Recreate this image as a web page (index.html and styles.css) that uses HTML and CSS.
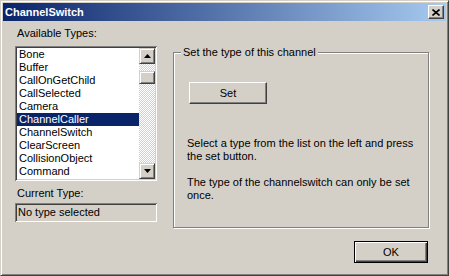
FILE: index.html
```html
<!DOCTYPE html>
<html lang="en">

<head>
    <meta charset="UTF-8" />
    <title>ChannelSwitch</title>
    <link rel="stylesheet" href="styles.css">
</head>

<body>
    <div class="window">
        <div class="titlebar">
            <span class="title">ChannelSwitch</span>
            <div class="close">
                <svg width="8" height="7" viewBox="0 0 8 7">
                    <path d="M0.5 0.5 L7.5 6.5 M7.5 0.5 L0.5 6.5" stroke="#000" stroke-width="1.6" fill="none" />
                </svg>
            </div>
        </div>

        <div class="content">
            <div class="left">
                <div class="label">Available Types:</div>
                <div class="listbox">
                    <ul class="items">
                        <li>Bone</li>
                        <li>Buffer</li>
                        <li>CallOnGetChild</li>
                        <li>CallSelected</li>
                        <li>Camera</li>
                        <li class="selected">ChannelCaller</li>
                        <li>ChannelSwitch</li>
                        <li>ClearScreen</li>
                        <li>CollisionObject</li>
                        <li>Command</li>
                    </ul>
                    <div class="scrollbar">
                        <div class="sb-btn">
                            <svg width="7" height="4" viewBox="0 0 7 4"><path d="M3.5 0 L7 4 L0 4 Z" fill="#000" /></svg>
                        </div>
                        <div class="track">
                            <div class="thumb"></div>
                        </div>
                        <div class="sb-btn">
                            <svg width="7" height="4" viewBox="0 0 7 4"><path d="M0 0 L7 0 L3.5 4 Z" fill="#000" /></svg>
                        </div>
                    </div>
                </div>
                <div class="label current-label">Current Type:</div>
                <div class="textbox">No type selected</div>
            </div>

            <div class="right">
                <div class="group">
                    <span class="legend">Set the type of this channel</span>
                    <div class="btn set-btn">Set</div>
                    <p class="info">Select a type from the list on the left and press the set button.</p>
                    <p class="info second">The type of the channelswitch can only be set once.</p>
                </div>
                <div class="footer">
                    <div class="btn ok-btn">OK</div>
                </div>
            </div>
        </div>
    </div>
</body>

</html>
```

FILE: styles.css
```css
* {
    box-sizing: border-box;
}

body {
    margin: 0;
    padding: 0;
    font-family: "Liberation Sans", Arial, sans-serif;
    font-size: 11px;
    color: #000;
    background: #d4d0c8;
}

.window {
    width: 449px;
    height: 276px;
    padding: 2px;
    background: #d4d0c8;
    border: 1px solid;
    border-color: #d4d0c8 #404040 #404040 #d4d0c8;
    box-shadow: inset 1px 1px #fff, inset -1px -1px #808080;
}

.titlebar {
    height: 18px;
    display: flex;
    align-items: center;
    justify-content: space-between;
    padding: 0 2px 0 2px;
    background: linear-gradient(to right, #0a246a, #a6caf0);
}

.title {
    color: #fff;
    font-weight: bold;
    font-size: 11px;
}

.close {
    width: 16px;
    height: 14px;
    display: flex;
    align-items: center;
    justify-content: center;
    background: #d4d0c8;
    border: 1px solid;
    border-color: #fff #404040 #404040 #fff;
    box-shadow: inset -1px -1px #808080;
}

.content {
    display: flex;
    gap: 16px;
    padding: 6px 0 0 12px;
}

.left {
    width: 142px;
}

.label {
    line-height: 13px;
    height: 13px;
    padding-left: 2px;
}

.listbox {
    margin-top: 6px;
    height: 135px;
    display: flex;
    padding: 2px;
    background: #fff;
    box-shadow: inset 1px 1px #808080, inset -1px -1px #fff, inset 2px 2px #404040, inset -2px -2px #d4d0c8;
}

.items {
    list-style: none;
    margin: 0;
    padding: 0;
    flex: 1;
    overflow: hidden;
}

.items li {
    height: 13px;
    line-height: 13px;
    padding-left: 2px;
    white-space: nowrap;
}

.items li.selected {
    background: #0a246a;
    color: #fff;
}

.scrollbar {
    width: 16px;
    display: flex;
    flex-direction: column;
}

.sb-btn {
    width: 16px;
    height: 16px;
    display: flex;
    align-items: center;
    justify-content: center;
    background: #d4d0c8;
    border: 1px solid;
    border-color: #d4d0c8 #404040 #404040 #d4d0c8;
    box-shadow: inset 1px 1px #fff, inset -1px -1px #808080;
}

.track {
    flex: 1;
    background-color: #d4d0c8;
    background-image: conic-gradient(#fff 25%, #d4d0c8 0 50%, #fff 0 75%, #d4d0c8 0);
    background-size: 2px 2px;
}

.thumb {
    margin-top: 7px;
    height: 13px;
    background: #d4d0c8;
    border: 1px solid;
    border-color: #d4d0c8 #404040 #404040 #d4d0c8;
    box-shadow: inset 1px 1px #fff, inset -1px -1px #808080;
}

.current-label {
    margin-top: 6px;
}

.textbox {
    margin-top: 3px;
    height: 19px;
    line-height: 15px;
    padding: 2px 3px;
    background: #d4d0c8;
    box-shadow: inset 1px 1px #808080, inset -1px -1px #fff, inset 2px 2px #404040, inset -2px -2px #d4d0c8;
}

.right {
    width: 256px;
    margin-top: 25px;
}

.group {
    position: relative;
    height: 176px;
    padding: 29px 0 0 13px;
    border: 1px solid #808080;
    box-shadow: inset 1px 1px #fff, 1px 1px #fff;
}

.legend {
    position: absolute;
    top: -7px;
    left: 7px;
    padding: 0 2px;
    line-height: 13px;
    background: #d4d0c8;
}

.btn {
    display: flex;
    align-items: center;
    justify-content: center;
    height: 22px;
    background: #d4d0c8;
    border: 1px solid;
    border-color: #fff #404040 #404040 #fff;
    box-shadow: inset -1px -1px #808080;
}

.set-btn {
    width: 78px;
    margin-left: 2px;
}

.info {
    margin: 33px 0 0 0;
    width: 232px;
    line-height: 13px;
}

.info.second {
    margin-top: 13px;
}

.footer {
    display: flex;
    justify-content: flex-end;
    margin-top: 13px;
    padding-right: 1px;
}

.ok-btn {
    width: 74px;
    border-color: #000;
    box-shadow: inset 1px 1px #fff, inset -1px -1px #404040, inset -2px -2px #808080;
}
```
